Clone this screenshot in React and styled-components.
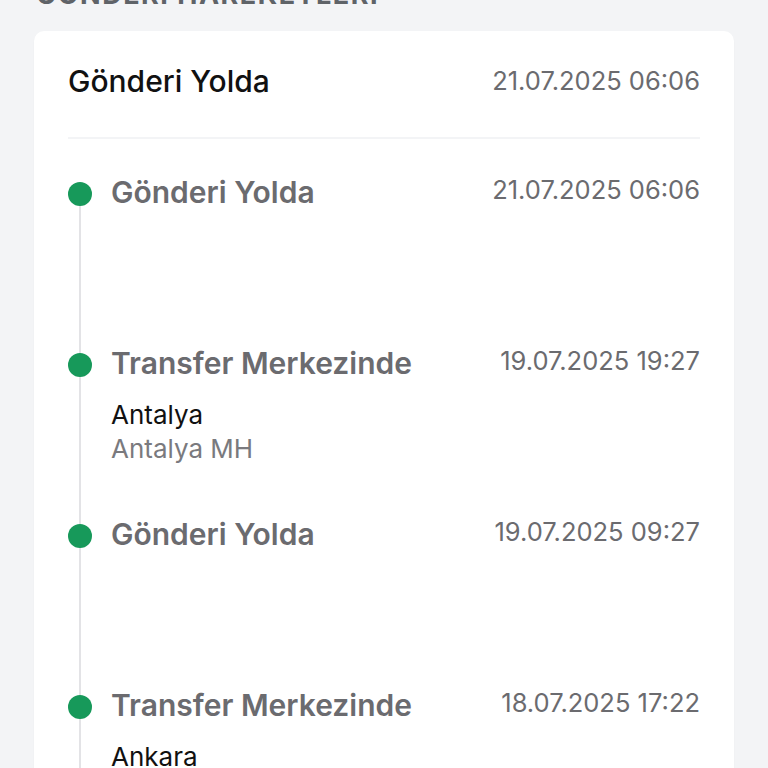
import styled, { createGlobalStyle } from 'styled-components';

const GlobalStyle = createGlobalStyle`
  html, body {
    margin: 0;
    padding: 0;
    background: #f3f4f6;
    font-family: Inter, "Noto Sans", sans-serif;
    overflow: hidden;
  }
`;

const events = [
  { title: 'Gönderi Yolda', date: '21.07.2025 06:06' },
  { title: 'Transfer Merkezinde', date: '19.07.2025 19:27', city: 'Antalya', branch: 'Antalya MH' },
  { title: 'Gönderi Yolda', date: '19.07.2025 09:27' },
  { title: 'Transfer Merkezinde', date: '18.07.2025 17:22', city: 'Ankara', branch: 'Ankara MH' },
];

const Page = styled.div`
  padding: 0 34px;
  margin-top: -20px;
`;

const SectionTitle = styled.h2`
  margin: 0 0 21px 2px;
  font-size: 27px;
  line-height: 30px;
  font-weight: 700;
  letter-spacing: 1.5px;
  color: #5f6368;
  text-transform: uppercase;
`;

const Card = styled.div`
  background: #fff;
  border-radius: 10px;
  padding: 30px 34px 0;
  box-shadow: 0 1px 2px rgba(0, 0, 0, 0.03);
`;

const Header = styled.div`
  display: flex;
  justify-content: space-between;
  align-items: flex-start;
  padding-bottom: 36px;
  border-bottom: 2px solid #f3f4f6;
`;

const HeaderTitle = styled.div`
  font-size: 30px;
  line-height: 40px;
  font-weight: 500;
  color: #111;
`;

const DateText = styled.div`
  font-size: 25.5px;
  line-height: ${(p) => p.$lh || '40px'};
  color: #6b6b6f;
  white-space: nowrap;
`;

const Timeline = styled.div`
  padding-top: 35px;
`;

const Item = styled.div`
  display: grid;
  grid-template-columns: 24px 1fr auto;
  column-gap: 19px;
  min-height: 171px;
`;

const Rail = styled.div`
  position: relative;
  display: flex;
  justify-content: center;
  &::after {
    content: '';
    position: absolute;
    top: 20px;
    bottom: -20px;
    left: 11px;
    width: 2px;
    background: #e3e3e6;
  }
`;

const Dot = styled.span`
  position: relative;
  z-index: 1;
  margin-top: 8px;
  width: 24px;
  height: 24px;
  border-radius: 50%;
  background: #17995a;
`;

const Body = styled.div`
  display: flex;
  flex-direction: column;
`;

const ItemTitle = styled.div`
  margin-top: 2px;
  font-size: 30px;
  line-height: 32px;
  font-weight: 600;
  color: #6b6b6f;
`;

const City = styled.div`
  margin-top: 19px;
  font-size: 26px;
  line-height: 34px;
  color: #111;
`;

const Branch = styled.div`
  font-size: 26px;
  line-height: 34px;
  color: #7a7a7e;
`;

export default function App() {
  return (
    <>
      <GlobalStyle />
      <Page>
        <SectionTitle>Gönderi Hareketleri</SectionTitle>
        <Card>
          <Header>
            <HeaderTitle>Gönderi Yolda</HeaderTitle>
            <DateText>21.07.2025 06:06</DateText>
          </Header>
          <Timeline>
            {events.map((e, i) => (
              <Item key={i}>
                <Rail>
                  <Dot />
                </Rail>
                <Body>
                  <ItemTitle>{e.title}</ItemTitle>
                  {e.city && <City>{e.city}</City>}
                  {e.branch && <Branch>{e.branch}</Branch>}
                </Body>
                <DateText $lh="32px">{e.date}</DateText>
              </Item>
            ))}
          </Timeline>
        </Card>
      </Page>
    </>
  );
}
